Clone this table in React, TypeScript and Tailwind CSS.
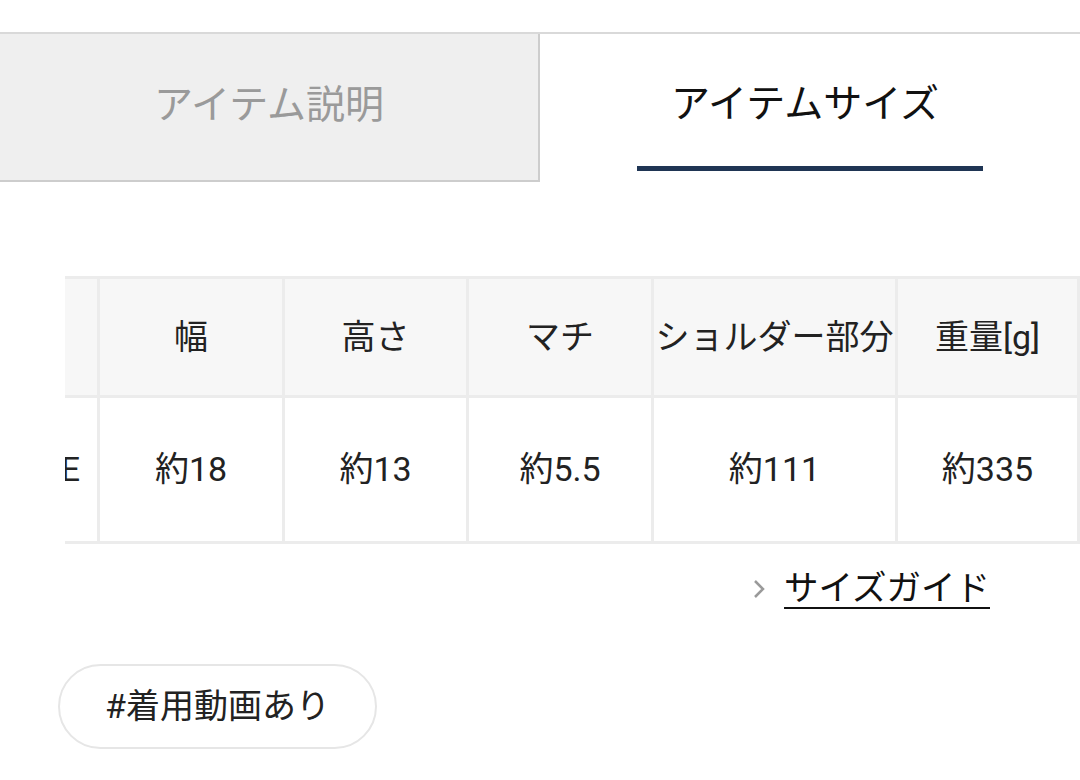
import React from "react";

const font = { fontFamily: "Roboto, 'Noto Sans CJK JP', 'Noto Sans', sans-serif" };

export default function App() {
  const heads = ["幅", "高さ", "マチ", "ショルダー部分", "重量[g]"];
  const vals = ["約18", "約13", "約5.5", "約111", "約335"];
  return (
    <div className="w-[1080px] h-[780px] bg-white overflow-hidden text-[#222]" style={font}>
      <div className="pt-[32px]">
        <div className="flex border-t-2 border-[#d9d9d9] h-[150px]">
          <div className="w-[540px] bg-[#efefef] border-r-2 border-b-2 border-[#cdcdcd] flex items-center justify-center pb-[4px]">
            <span className="text-[39px] text-[#9a9a9a]">アイテム説明</span>
          </div>
          <div className="flex-1 flex flex-col items-center">
            <div className="pt-[42px] leading-[57px] text-[39px] text-[#111] pr-[10px]">アイテムサイズ</div>
            <div className="mt-[33px] w-[346px] h-[5px] bg-[#1f3554]" />
          </div>
        </div>

        <div className="ml-[65px] mt-[94px] w-[1015px] overflow-hidden">
          <div className="grid grid-cols-[32px_182px_181px_182px_241px_179px] gap-[3px] bg-[#ececec] py-[3px] pr-[3px]">
            <div className="h-[116px] bg-[#f7f7f7]" />
            {heads.map((h) => (
              <div key={h} className="h-[116px] bg-[#f7f7f7] flex items-center justify-center text-[34px] whitespace-nowrap">
                {h}
              </div>
            ))}
            <div className="h-[143px] bg-white overflow-hidden flex items-center justify-end">
              <span className="text-[34px] whitespace-nowrap pr-[17px] shrink-0">FREE</span>
            </div>
            {vals.map((v) => (
              <div key={v} className="h-[143px] bg-white flex items-center justify-center text-[34px] whitespace-nowrap">
                {v}
              </div>
            ))}
          </div>
        </div>

        <div className="flex justify-end items-center pr-[90px] mt-[20px]">
          <svg width="14" height="22" viewBox="0 0 14 22" className="mr-[18px] mt-[2px]">
            <path d="M3 3 L11 11 L3 19" fill="none" stroke="#9a9a9a" strokeWidth="2.5" />
          </svg>
          <span className="text-[34.5px] leading-[48px] underline decoration-2 underline-offset-[7px] text-[#111]">サイズガイド</span>
        </div>

        <div className="mt-[52px] ml-[58px]">
          <div className="inline-flex items-center justify-center w-[319px] h-[85px] rounded-full border-2 border-[#e6e6e6] text-[34px] text-[#222]">
            #着用動画あり
          </div>
        </div>
      </div>
    </div>
  );
}
